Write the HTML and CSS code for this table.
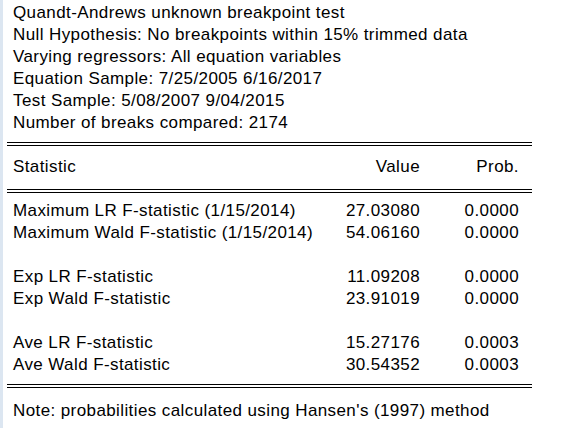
FILE: index.html
```html
<!DOCTYPE html>
<html>
<head>
<meta charset="utf-8">
<link rel="stylesheet" href="styles.css">
</head>
<body>
<div class="sheet">
  <div class="info">
    <div>Quandt-Andrews unknown breakpoint test</div>
    <div>Null Hypothesis: No breakpoints within 15% trimmed data</div>
    <div>Varying regressors: All equation variables</div>
    <div>Equation Sample: 7/25/2005 6/16/2017</div>
    <div>Test Sample: 5/08/2007 9/04/2015</div>
    <div>Number of breaks compared: 2174</div>
  </div>
  <div class="rule rule-top"></div>
  <div class="row head">
    <span>Statistic</span><span class="num">Value</span><span class="num">Prob.</span>
  </div>
  <div class="rule rule-mid"></div>
  <div class="body">
    <div class="row"><span>Maximum LR F-statistic (1/15/2014)</span><span class="num">27.03080</span><span class="num">0.0000</span></div>
    <div class="row"><span>Maximum Wald F-statistic (1/15/2014)</span><span class="num">54.06160</span><span class="num">0.0000</span></div>
    <div class="row blank"></div>
    <div class="row"><span>Exp LR F-statistic</span><span class="num">11.09208</span><span class="num">0.0000</span></div>
    <div class="row"><span>Exp Wald F-statistic</span><span class="num">23.91019</span><span class="num">0.0000</span></div>
    <div class="row blank"></div>
    <div class="row"><span>Ave LR F-statistic</span><span class="num">15.27176</span><span class="num">0.0003</span></div>
    <div class="row"><span>Ave Wald F-statistic</span><span class="num">30.54352</span><span class="num">0.0003</span></div>
  </div>
  <div class="rule rule-bottom"></div>
  <div class="note">Note: probabilities calculated using Hansen's (1997) method</div>
</div>
</body>
</html>
```

FILE: styles.css
```css
html, body {
  margin: 0;
  padding: 0;
  background: #ffffff;
}
body {
  font-family: "Liberation Sans", Arial, sans-serif;
  font-size: 17px;
  letter-spacing: 0.4px;
  line-height: 22px;
  color: #000000;
  width: 588px;
  height: 428px;
  overflow: hidden;
}
.sheet {
  border-left: 3px solid #dce6f1;
  height: 428px;
  box-sizing: border-box;
  padding-left: 4px;
  width: 532px;
}
.info {
  padding-top: 2px;
  padding-left: 6px;
}
.rule {
  height: 2px;
  border-top: 1px solid #000;
  border-bottom: 1px solid #000;
}
.rule-top { margin-top: 8px; }
.rule-mid { margin-top: 11px; }
.rule-bottom { margin-top: 8px; }
.row {
  display: grid;
  grid-template-columns: 1fr 100px 99px;
  padding-left: 6px;
  padding-right: 13px;
  height: 22px;
}
.head { margin-top: 10px; }
.body { margin-top: 7px; }
.num { text-align: right; }
.note {
  margin-top: 12px;
  padding-left: 6px;
}
```
